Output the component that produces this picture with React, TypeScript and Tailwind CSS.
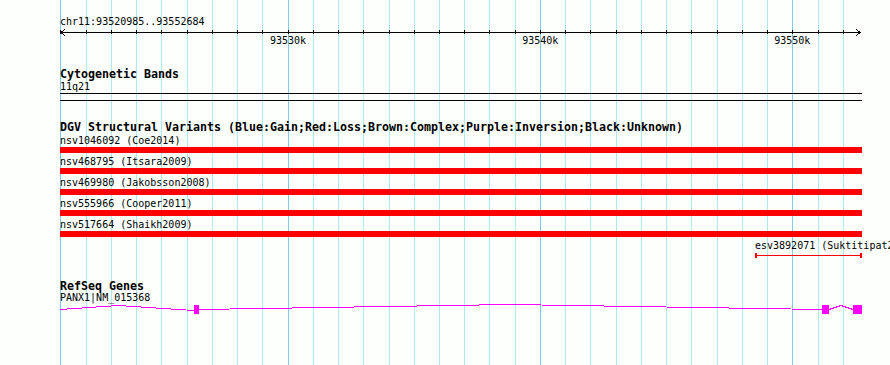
import React from 'react';

const SCALE_X0 = 60.4;
const PX_PER_KB = 25.24;
const gridXs = Array.from({ length: 32 }, (_, k) => Math.round(SCALE_X0 + k * PX_PER_KB));
const majorXs = [288, 540, 792];

const small = "font-['DejaVu_Sans_Mono','Liberation_Mono',monospace] text-[10px] leading-[10px] h-[11px] whitespace-pre text-black";
const bold = "font-['DejaVu_Sans_Mono','Liberation_Mono',monospace] font-bold text-[11.63px] leading-[10.4px] h-[12px] whitespace-pre text-black";

const variants = [
  'nsv1046092 (Coe2014)',
  'nsv468795 (Itsara2009)',
  'nsv469980 (Jakobsson2008)',
  'nsv555966 (Cooper2011)',
  'nsv517664 (Shaikh2009)',
];

const Grid: React.FC = () => (
  <svg className="absolute inset-0" width={890} height={365} shapeRendering="crispEdges">
    {gridXs.map((x) => (
      <rect
        key={x}
        x={x}
        y={0}
        width={1}
        height={365}
        fill={majorXs.includes(x) || x === 60 ? '#80cbe6' : '#ade9ee'}
      />
    ))}
  </svg>
);

const Ruler: React.FC = () => (
  <svg className="block" width={890} height={8} shapeRendering="crispEdges">
    <rect x={60} y={4} width={801} height={1} fill="#000" />
    {gridXs.map((x) => (
      <rect key={x} x={x} y={2} width={1} height={4} fill="#000" />
    ))}
    <path d="M65 1 L61 4.5 L65 8" fill="none" stroke="#000" strokeWidth={1} />
    <path d="M856 1 L860 4.5 L856 8" fill="none" stroke="#000" strokeWidth={1} />
  </svg>
);

const Gene: React.FC = () => (
  <svg className="block" width={890} height={12} shapeRendering="crispEdges">
    <g fill="none" stroke="#ff00ff" strokeWidth={1}>
      <polyline points="60,5.5 118,1.5 194,6.5" />
      <polyline points="199,5.5 510,0.5 822,5.5" />
      <polyline points="829,5.5 841,1.5 853,5.5" />
    </g>
    <g fill="#ff00ff">
      <rect x={194} y={1} width={5} height={9} />
      <rect x={822} y={1} width={7} height={9} />
      <rect x={853} y={1} width={9} height={9} />
    </g>
  </svg>
);

export default function App() {
  return (
    <div className="relative w-[890px] h-[365px] overflow-hidden bg-[#fcfffc]">
      <Grid />

      <div className="relative pt-[17px]">
        {/* ruler */}
        <div className={`${small} ml-[60px]`}>chr11:93520985..93552684</div>
        <Ruler />
        <div className={`${small} flex pl-[270px] gap-[216px]`}>
          <span>93530k</span>
          <span>93540k</span>
          <span>93550k</span>
        </div>

        {/* cytogenetic bands */}
        <div className={`${bold} mt-[22px] ml-[60px]`}>Cytogenetic Bands</div>
        <div className={`${small} mt-[1px] ml-[60px]`}>11q21</div>
        <div className="ml-[60px] w-[802px] h-[8px] border-y border-black" />

        {/* DGV */}
        <div className={`${bold} mt-[21px] ml-[60px]`}>
          DGV Structural Variants (Blue:Gain;Red:Loss;Brown:Complex;Purple:Inversion;Black:Unknown)
        </div>
        <div className="mt-[2px] flex flex-col gap-[4px]">
          {variants.map((v) => (
            <div key={v}>
              <div className={`${small} ml-[60px]`}>{v}</div>
              <div className="ml-[60px] w-[802px] h-[6px] bg-[#ff0000]" />
            </div>
          ))}
          <div>
            <div className={`${small} ml-[755px]`}>esv3892071 (Suktitipat2014)</div>
            <div className="mt-[1px] ml-[755px] w-[107px] h-[5px] border-x-2 border-[#ff0000] flex items-center">
              <div className="h-px w-full bg-[#ff0000]" />
            </div>
          </div>
        </div>

        {/* RefSeq */}
        <div className={`${bold} mt-[23px] ml-[60px]`}>RefSeq Genes</div>
        <div className={`${small} ml-[60px]`}>PANX1|NM_015368</div>
        <Gene />
      </div>
    </div>
  );
}
